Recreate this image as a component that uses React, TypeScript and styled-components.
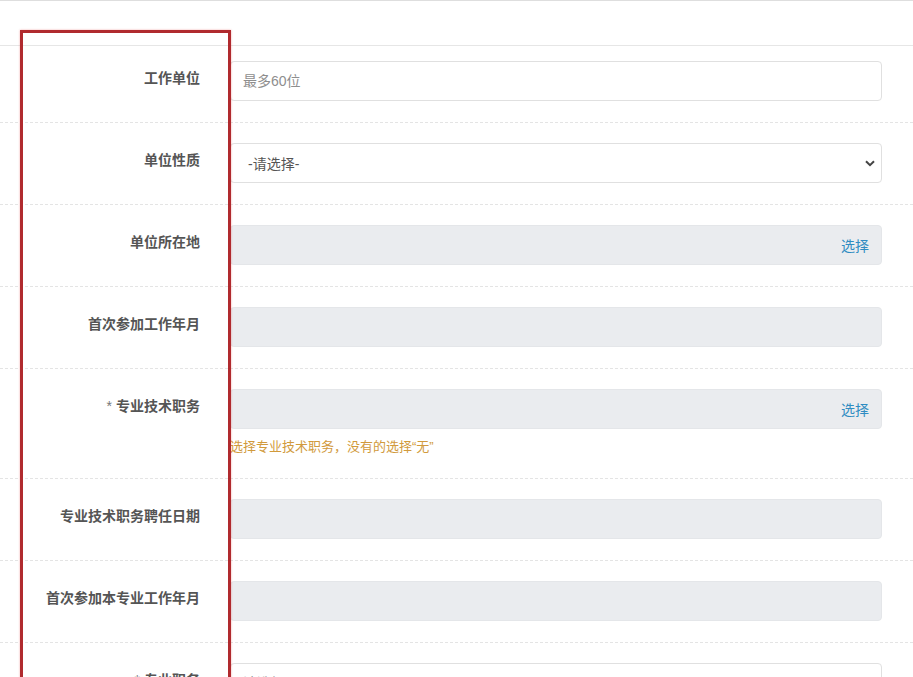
import React from 'react';
import styled, { createGlobalStyle } from 'styled-components';

const GlobalStyle = createGlobalStyle`
    html, body {
        margin: 0;
        padding: 0;
        background: #fff;
    }
    body {
        font-family: "Liberation Sans", "Noto Sans CJK SC", sans-serif;
        overflow: hidden;
    }
`;

const Page = styled.div`
    position: relative;
    min-height: 677px;
    border-top: 1px solid #dedede;
`;

const TopBar = styled.div`
    height: 44px;
    border-bottom: 1px solid #e6e6e6;
`;

const Row = styled.div<{ $first?: boolean }>`
    display: grid;
    grid-template-columns: 200px 1fr;
    column-gap: 30px;
    padding: ${p => (p.$first ? '15px' : '20px')} 31px 21px 0;
    border-bottom: 1px dashed #e4e4e4;
`;

const Label = styled.label`
    padding-top: 7px;
    text-align: right;
    font-size: 14px;
    line-height: 20px;
    font-weight: bold;
    color: #555;
    white-space: nowrap;
`;

const Star = styled.span`
    font-weight: normal;
    color: #777;
    margin-right: 4px;
`;

const Field = styled.div`
    display: flex;
    flex-direction: column;
`;

const TextInput = styled.input`
    height: 40px;
    box-sizing: border-box;
    width: 100%;
    padding: 0 12px;
    border: 1px solid #e0e0e0;
    border-radius: 4px;
    background: #fff;
    font: inherit;
    font-size: 14px;
    color: #555;
    outline: none;
    &::placeholder {
        color: #8e8e8e;
    }
`;

const SelectBox = styled.div`
    height: 40px;
    box-sizing: border-box;
    display: flex;
    align-items: center;
    justify-content: space-between;
    padding: 0 6px 0 17px;
    border: 1px solid #e0e0e0;
    border-radius: 4px;
    background: #fff;
    font-size: 14px;
    color: #555;
`;

const ReadOnlyBox = styled.div`
    height: 40px;
    box-sizing: border-box;
    display: flex;
    align-items: center;
    justify-content: flex-end;
    padding: 0 12px;
    border: 1px solid #e4e6e9;
    border-radius: 4px;
    background: #eaecef;
`;

const PickLink = styled.a`
    font-size: 14px;
    color: #2f8cc2;
    text-decoration: none;
    cursor: pointer;
`;

const Hint = styled.div`
    margin-top: 8px;
    font-size: 13px;
    line-height: 20px;
    color: #d19a3c;
`;

const Marker = styled.div`
    position: absolute;
    left: 20px;
    top: 29px;
    width: 211px;
    height: 700px;
    box-sizing: border-box;
    border: 3px solid #b02a2e;
    box-shadow: 0 0 2px rgba(230, 70, 70, 0.45);
    pointer-events: none;
`;

type Kind = 'text' | 'select' | 'readonly';

interface FieldDef {
    label: string;
    required?: boolean;
    kind: Kind;
    placeholder?: string;
    pick?: boolean;
    hint?: string;
}

const fields: FieldDef[] = [
    { label: '工作单位', kind: 'text', placeholder: '最多60位' },
    { label: '单位性质', kind: 'select', placeholder: '-请选择-' },
    { label: '单位所在地', kind: 'readonly', pick: true },
    { label: '首次参加工作年月', kind: 'readonly' },
    { label: '专业技术职务', required: true, kind: 'readonly', pick: true, hint: '选择专业技术职务，没有的选择“无”' },
    { label: '专业技术职务聘任日期', kind: 'readonly' },
    { label: '首次参加本专业工作年月', kind: 'readonly' },
    { label: '专业职务', required: true, kind: 'text', placeholder: '请选择' }
];

const Chevron = () => (
    <svg width="10" height="7" viewBox="0 0 10 7">
        <path d="M1 1.2 L5 5.2 L9 1.2" fill="none" stroke="#444" strokeWidth="2" />
    </svg>
);

const renderControl = (f: FieldDef) => {
    if (f.kind === 'text') {
        return <TextInput placeholder={f.placeholder} />;
    }
    if (f.kind === 'select') {
        return (
            <SelectBox>
                <span>{f.placeholder}</span>
                <Chevron />
            </SelectBox>
        );
    }
    return <ReadOnlyBox>{f.pick && <PickLink>选择</PickLink>}</ReadOnlyBox>;
};

export default function App() {
    return (
        <Page>
            <GlobalStyle />
            <TopBar />
            {fields.map((f, i) => (
                <Row key={f.label} $first={i === 0}>
                    <Label>
                        {f.required && <Star>*</Star>}
                        {f.label}
                    </Label>
                    <Field>
                        {renderControl(f)}
                        {f.hint && <Hint>{f.hint}</Hint>}
                    </Field>
                </Row>
            ))}
            <Marker />
        </Page>
    );
}
